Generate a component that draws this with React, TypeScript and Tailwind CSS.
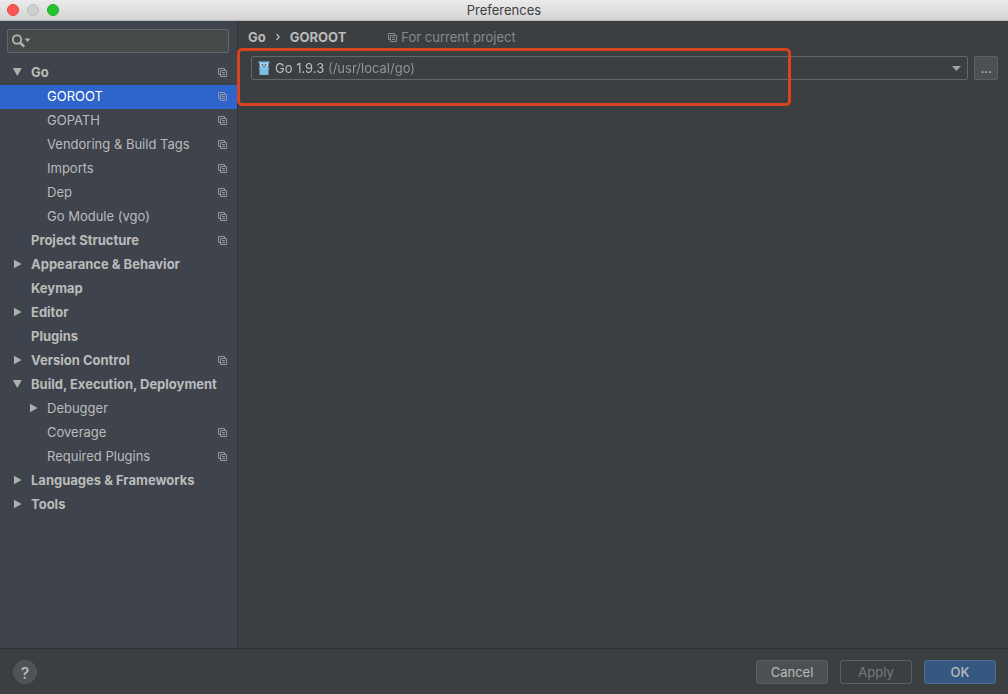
import { useState } from "react";

type Item = {
  label: string;
  child?: boolean;
  arrow?: "open" | "closed";
  project?: boolean;
};

const items: Item[] = [
  { label: "Go", arrow: "open", project: true },
  { label: "GOROOT", child: true, project: true },
  { label: "GOPATH", child: true, project: true },
  { label: "Vendoring & Build Tags", child: true, project: true },
  { label: "Imports", child: true, project: true },
  { label: "Dep", child: true, project: true },
  { label: "Go Module (vgo)", child: true, project: true },
  { label: "Project Structure", project: true },
  { label: "Appearance & Behavior", arrow: "closed" },
  { label: "Keymap" },
  { label: "Editor", arrow: "closed" },
  { label: "Plugins" },
  { label: "Version Control", arrow: "closed", project: true },
  { label: "Build, Execution, Deployment", arrow: "open" },
  { label: "Debugger", child: true, arrow: "closed" },
  { label: "Coverage", child: true, project: true },
  { label: "Required Plugins", child: true, project: true },
  { label: "Languages & Frameworks", arrow: "closed" },
  { label: "Tools", arrow: "closed" },
];

function ProjectIcon() {
  return (
    <svg className="size-[9px] shrink-0" viewBox="0 0 9 9" fill="none" stroke="currentColor" aria-hidden="true">
      <path d="M2 6.5H.5v-6h6V2" />
      <path d="M2.5 2.5h6v6h-6z" />
      <path d="M4 4.5h3M4 6.5h3" />
    </svg>
  );
}

function Arrow({ state }: { state?: "open" | "closed" }) {
  return (
    <svg className="size-[10px] shrink-0" viewBox="0 0 10 10" fill="#afb1b3" aria-hidden="true">
      {state === "open" && <path d="M.8 1h9L5.3 9z" />}
      {state === "closed" && <path d="M2 .8v8.4L9.6 5z" />}
    </svg>
  );
}

function Gopher() {
  return (
    <svg className="h-4 w-3" viewBox="0 0 12 16" aria-hidden="true">
      <circle cx="2" cy="2.5" r="1.4" fill="#6fb0d4" />
      <circle cx="10" cy="2.5" r="1.4" fill="#6fb0d4" />
      <path d="M1.5 4C1.5 2 3.2 1.5 6 1.5s4.500.5 4.500 2.500V15h-9z" fill="#7bbfe3" />
      <path d="M1 8.500h1M10 8.500h1" stroke="#7bbfe3" />
      <circle cx="3.800" cy="4.800" r="1.500" fill="#fff" />
      <circle cx="8.200" cy="4.800" r="1.500" fill="#fff" />
      <circle cx="4.200" cy="4.900" r=".8" fill="#222" />
      <circle cx="7.800" cy="4.900" r=".8" fill="#222" />
      <path d="M5.400 6h1.200v1H5.400z" fill="#3b4347" />
    </svg>
  );
}

export default function App() {
  const [selected, setSelected] = useState("GOROOT");

  return (
    <div className="flex min-h-screen flex-col bg-[#3c3f41] font-[Inter,sans-serif] text-[13px] leading-4 text-[#bbbbbb]">
      <header className="grid h-[21px] grid-cols-[1fr_auto_1fr] items-center border-b border-[#b9b9b9] bg-linear-to-b from-[#ebebeb] to-[#d3d3d3] px-[7px] text-[#404040]">
        <div className="flex gap-2">
          <button aria-label="Close" className="size-3 rounded-full border border-[#e2463f] bg-[#fc5753]" />
          <button aria-label="Minimize" className="size-3 rounded-full border border-[#bdbdbd] bg-[#cfcfcf]" />
          <button aria-label="Zoom" className="size-3 rounded-full border border-[#1dad2b] bg-[#27c232]" />
        </div>
        <h1>Preferences</h1>
      </header>

      <div className="flex flex-1">
        <aside className="w-[238px] shrink-0 border-r border-[#303336] bg-[#3f434c]">
          <label className="my-2 mr-2 ml-[7px] flex h-6 items-center rounded-[2px] border border-[#646769] bg-[#45494a] px-1">
            <svg className="h-4 w-5 shrink-0" viewBox="0 0 20 16" fill="none" stroke="#afb1b3" aria-hidden="true">
              <circle cx="5" cy="6.500" r="4.200" strokeWidth="1.900" />
              <path d="M8 9.500l4.200 4.200" strokeWidth="2.500" />
              <path d="M12.500 5.500h6l-3 3.500z" fill="#afb1b3" stroke="none" />
            </svg>
            <input type="search" aria-label="Search settings" className="min-w-0 flex-1 bg-transparent outline-none" />
          </label>
          <nav aria-label="Settings">
            {items.map((item) => {
              const active = item.label === selected;
              return (
                <button
                  key={item.label}
                  onClick={() => setSelected(item.label)}
                  aria-current={active ? "page" : undefined}
                  className={`flex h-6 w-full items-center gap-[9px] pr-[10px] pb-0.5 text-left ${item.child ? "pl-7" : "pl-3 font-bold"} ${active ? "bg-[#2f65ca] text-white" : ""}`}
                >
                  <Arrow state={item.arrow} />
                  <span className="flex-1 whitespace-nowrap">{item.label}</span>
                  {item.project && (
                    <span className="text-[#92969e]">
                      <ProjectIcon />
                    </span>
                  )}
                </button>
              );
            })}
          </nav>
        </aside>

        <main className="relative min-w-0 flex-1 px-[10px] pt-2">
          <div className="flex h-4 items-center">
            <h2 className="flex items-center gap-[10px] font-bold">
              <span>Go</span>
              <svg className="h-2 w-1" viewBox="0 0 4 8" fill="none" stroke="currentColor" strokeWidth="1.300" aria-hidden="true">
                <path d="M.5 1L3.200 4 .5 7" />
              </svg>
              <span>GOROOT</span>
            </h2>
            <p className="ml-[42px] flex items-center gap-1 text-[#888a8c]">
              <ProjectIcon />
              For current project
            </p>
          </div>
          <div className="mt-[11px] ml-[3px] flex gap-[6px]">
            <div className="grid min-w-0 flex-1 items-center rounded-[2px] border border-[#646769] *:col-start-1 *:row-start-1">
              <select
                aria-label="GOROOT"
                className="h-[22px] w-full appearance-none bg-[linear-gradient(to_right,#c4c4c4_76px,#949698_76px)] bg-clip-text pl-[23px] text-transparent"
              >
                <option className="bg-[#3c3f41] text-[#bbbbbb]">Go 1.9.3 (/usr/local/go)</option>
              </select>
              <span className="pointer-events-none ml-[6px]">
                <Gopher />
              </span>
              <svg className="pointer-events-none mr-[6px] h-[5px] w-[9px] justify-self-end" viewBox="0 0 9 5" fill="#9fa2a4" aria-hidden="true">
                <path d="M0 0h9L4.500 5z" />
              </svg>
            </div>
            <button aria-label="Browse" className="h-6 w-6 rounded-[2px] border border-[#5e6163] bg-[#4c5052]">
              ...
            </button>
          </div>
          <div className="pointer-events-none absolute top-[27px] -left-px h-[58px] w-[554px] rounded-[5px] border-3 border-[#d9431e]" />
        </main>
      </div>

      <footer className="flex h-[46px] items-center justify-between border-t border-[#2f3234] pr-3 pl-[13px]">
        <button aria-label="Help" className="size-6 rounded-full border border-[#55585a] bg-[#4f5355] text-base font-medium">
          ?
        </button>
        <div className="flex gap-3">
          <button className="h-6 w-[72px] rounded-[3px] border border-[#5e6163] bg-[#4c5052]">Cancel</button>
          <button disabled className="h-6 w-[72px] rounded-[3px] border border-[#5e6163] text-[#777a7c]">
            Apply
          </button>
          <button className="h-6 w-[72px] rounded-[3px] border border-[#4c708c] bg-[#365880] font-medium">OK</button>
        </div>
      </footer>
    </div>
  );
}
